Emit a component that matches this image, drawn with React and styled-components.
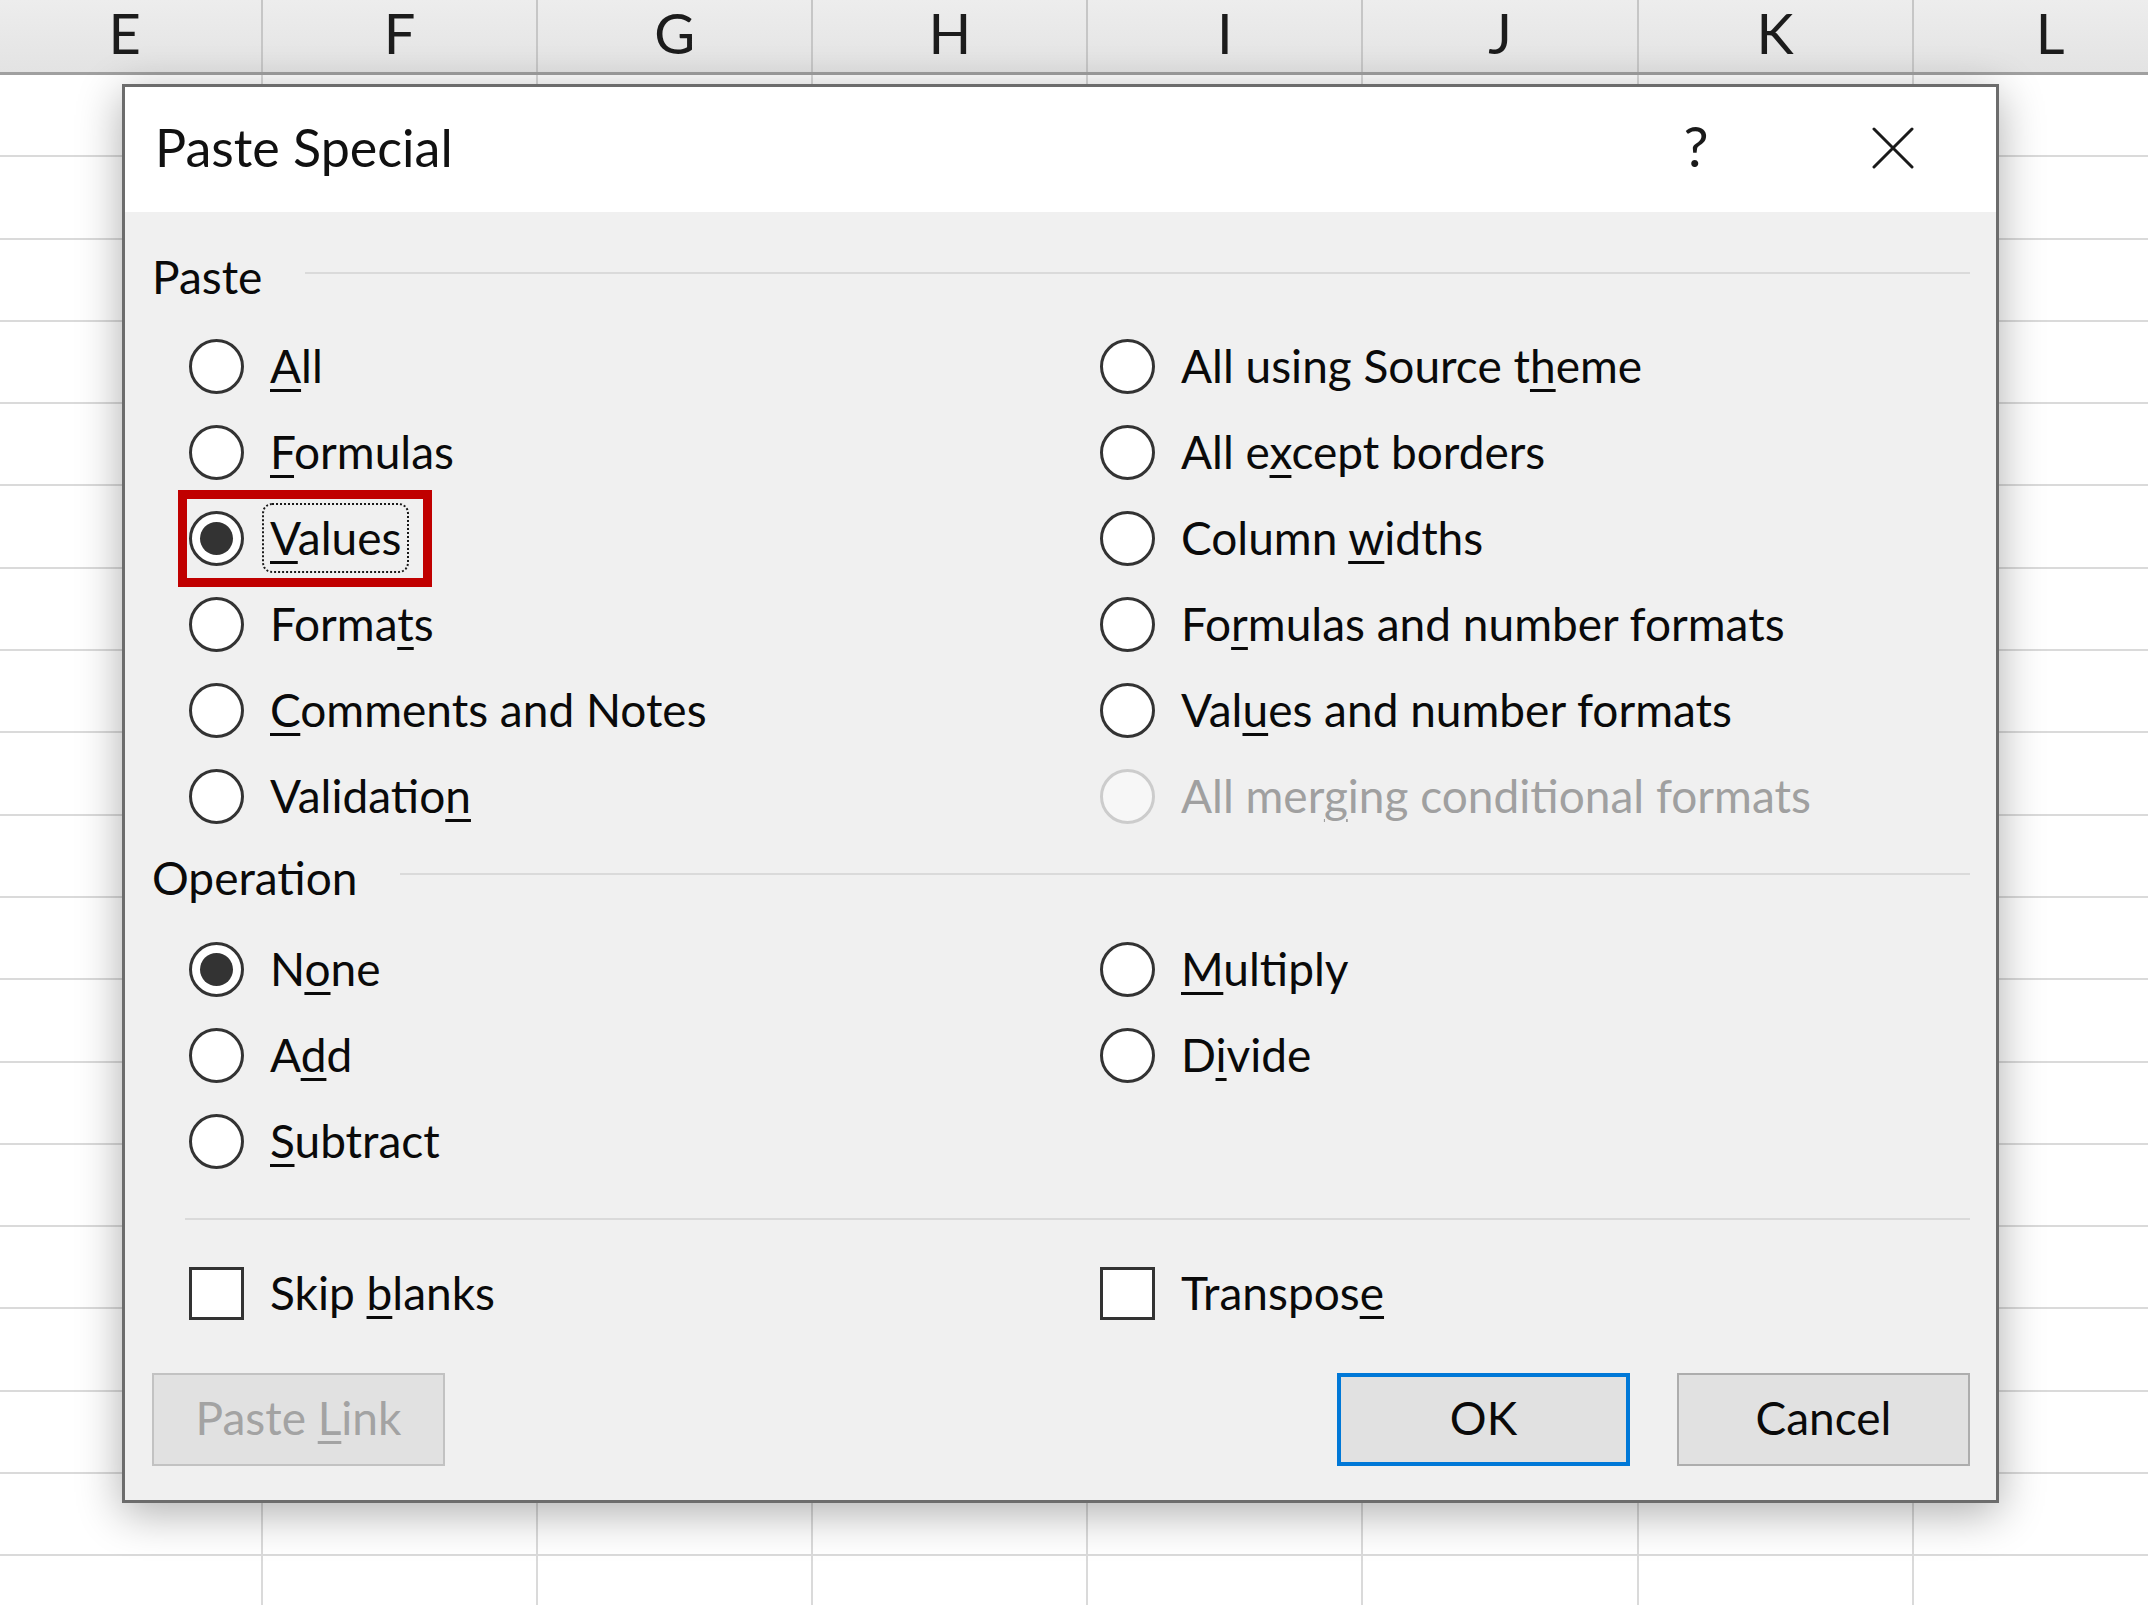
import React from 'react';
import styled, { createGlobalStyle } from 'styled-components';

const FONT = `"Lato", "Noto Sans", "Liberation Sans", sans-serif`;

const Global = createGlobalStyle`
  html, body { margin: 0; padding: 0; }
  body {
    width: 2148px;
    height: 1605px;
    overflow: hidden;
    background: #ffffff;
    font-family: ${FONT};
  }
`;

const Page = styled.div`
  position: relative;
  width: 2148px;
  height: 1605px;
  overflow: hidden;
  background: #ffffff;
`;

/* ---------- spreadsheet behind ---------- */
const Sheet = styled.div`
  display: flex;
  flex-direction: column;
  margin-left: -12px;
`;

const HeaderRow = styled.div`
  display: flex;
  height: 75px;
  box-sizing: border-box;
  background: linear-gradient(#ededed, #e3e3e3);
  border-bottom: 3px solid #a0a0a0;
`;

const ColHead = styled.div`
  flex: 0 0 275.1px;
  box-sizing: border-box;
  border-right: 2px solid #c6c6c6;
  display: flex;
  align-items: center;
  justify-content: center;
  font-size: 56px;
  color: #1c1c1c;
  padding-bottom: 8px;
`;

const GridRow = styled.div`
  display: flex;
  height: 82.3px;
`;

const Cell = styled.div`
  flex: 0 0 275.1px;
  box-sizing: border-box;
  border-right: 2px solid #dadada;
  border-bottom: 2px solid #dadada;
`;

/* ---------- dialog ---------- */
const Dialog = styled.div`
  position: absolute;
  left: 122px;
  top: 84px;
  width: 1877px;
  height: 1419px;
  box-sizing: border-box;
  border: 3px solid #6c6c6c;
  box-shadow: 0 10px 42px rgba(0, 0, 0, 0.32);
  display: flex;
  flex-direction: column;
  font-family: ${FONT};
  color: #000;
`;

const TitleBar = styled.div`
  height: 125px;
  flex: 0 0 125px;
  background: #ffffff;
  display: flex;
  align-items: center;
  padding: 0 43px 0 30px;
`;

const Title = styled.div`
  font-size: 52px;
  color: #111;
  flex: 1;
  padding-bottom: 6px;
`;

const HelpBtn = styled.div`
  width: 100px;
  margin-right: 87px;
  text-align: center;
  font-size: 56px;
  font-weight: 400;
  color: #1a1a1a;
  padding-bottom: 8px;
`;

const CloseBtn = styled.div`
  width: 120px;
  display: flex;
  justify-content: center;
  align-items: center;
  padding-bottom: 4px;
`;

const Body = styled.div`
  flex: 1;
  background: #f0f0f0;
  padding: 40px 26px 34px 27px;
  display: flex;
  flex-direction: column;
`;

const GroupHeader = styled.div`
  display: flex;
  align-items: center;
  height: 50px;
  margin-top: ${(p) => p.$mt || 0}px;
`;

const GroupLabel = styled.span`
  font-size: 46px;
  line-height: 50px;
  color: #0a0a0a;
`;

const GroupLine = styled.div`
  flex: 1;
  height: 2px;
  background: #dadada;
  margin-left: 43px;
  margin-bottom: 8px;
`;

const OptionGrid = styled.div`
  display: grid;
  grid-template-columns: 911px 1fr;
  grid-auto-rows: 86px;
  padding-left: 37px;
  margin-top: ${(p) => p.$mt || 0}px;
`;

const Option = styled.div`
  display: flex;
  align-items: center;
  position: relative;

  ${(p) =>
    p.$highlight &&
    `
    &::before {
      content: '';
      position: absolute;
      left: -11px;
      top: -5px;
      width: 254px;
      height: 97px;
      box-sizing: border-box;
      border: 9px solid #c00000;
      pointer-events: none;
    }
  `}
`;

const Radio = styled.span`
  flex: 0 0 55px;
  width: 55px;
  height: 55px;
  box-sizing: border-box;
  border-radius: 50%;
  border: 3.5px solid ${(p) => (p.$disabled ? '#cccccc' : '#333333')};
  background: ${(p) => (p.$disabled ? '#f7f7f7' : '#ffffff')};
  display: flex;
  align-items: center;
  justify-content: center;

  &::after {
    content: '';
    display: ${(p) => (p.$checked ? 'block' : 'none')};
    width: 33px;
    height: 33px;
    border-radius: 50%;
    background: #333333;
  }
`;

const CheckBox = styled.span`
  flex: 0 0 55px;
  width: 55px;
  height: 53px;
  box-sizing: border-box;
  border: 3.5px solid #333333;
  background: #ffffff;
`;

const Label = styled.span`
  margin-left: 26px;
  font-size: 46px;
  line-height: 54px;
  white-space: nowrap;
  color: ${(p) => (p.$disabled ? '#a0a0a0' : '#0a0a0a')};
  ${(p) =>
    p.$focused &&
    `
    outline: 2.5px dotted #1a1a1a;
    outline-offset: 6px;
    border-radius: 2px;
  `}
`;

const U = styled.span`
  text-decoration: underline;
  text-decoration-thickness: 3px;
  text-underline-offset: 6px;
`;

const Separator = styled.div`
  height: 2px;
  background: #dadada;
  margin: 34px 0 0 33px;
`;

const ButtonRow = styled.div`
  display: flex;
  align-items: center;
  margin-top: 37px;
  gap: 47px;
`;

const Spacer = styled.div`
  flex: 1;
`;

const Button = styled.button`
  width: 293px;
  height: 93px;
  box-sizing: border-box;
  font-family: ${FONT};
  font-size: 46px;
  background: #e1e1e1;
  color: ${(p) => (p.$disabled ? '#a3a3a3' : '#0a0a0a')};
  border: ${(p) =>
    p.$primary ? '4px solid #0078d7' : p.$disabled ? '2px solid #c2c2c2' : '2px solid #adadad'};
  padding: 0 0 4px;
  margin: 0;
  cursor: default;
`;

/* ---------- data ---------- */
const L = (before, key, after) => (
  <>
    {before}
    <U>{key}</U>
    {after}
  </>
);

const pasteLeft = [
  { label: L('', 'A', 'll') },
  { label: L('', 'F', 'ormulas') },
  { label: L('', 'V', 'alues'), checked: true, focused: true, highlight: true },
  { label: L('Forma', 't', 's') },
  { label: L('', 'C', 'omments and Notes') },
  { label: L('Validatio', 'n', '') },
];

const pasteRight = [
  { label: L('All using Source t', 'h', 'eme') },
  { label: L('All e', 'x', 'cept borders') },
  { label: L('Column ', 'w', 'idths') },
  { label: L('Fo', 'r', 'mulas and number formats') },
  { label: L('Val', 'u', 'es and number formats') },
  { label: L('All mer', 'g', 'ing conditional formats'), disabled: true },
];

const opLeft = [
  { label: L('N', 'o', 'ne'), checked: true },
  { label: L('A', 'd', 'd') },
  { label: L('', 'S', 'ubtract') },
];

const opRight = [
  { label: L('', 'M', 'ultiply') },
  { label: L('D', 'i', 'vide') },
  null,
];

const interleave = (a, b) => {
  const out = [];
  for (let i = 0; i < a.length; i++) {
    out.push(a[i]);
    out.push(b[i]);
  }
  return out;
};

const RadioOption = ({ item }) => {
  if (!item) return <div />;
  return (
    <Option $highlight={item.highlight}>
      <Radio $checked={item.checked} $disabled={item.disabled} />
      <Label $disabled={item.disabled} $focused={item.focused}>
        {item.label}
      </Label>
    </Option>
  );
};

const CloseIcon = () => (
  <svg width="42" height="42" viewBox="0 0 42 42">
    <path d="M2 2 L40 40 M40 2 L2 40" stroke="#1a1a1a" strokeWidth="3" strokeLinecap="round" fill="none" />
  </svg>
);

const columns = ['E', 'F', 'G', 'H', 'I', 'J', 'K', 'L'];
const rows = Array.from({ length: 19 }, (_, i) => i);

export default function App() {
  return (
    <Page>
      <Global />
      <Sheet>
        <HeaderRow>
          {columns.map((c) => (
            <ColHead key={c}>{c}</ColHead>
          ))}
        </HeaderRow>
        {rows.map((r) => (
          <GridRow key={r}>
            {columns.map((c) => (
              <Cell key={c} />
            ))}
          </GridRow>
        ))}
      </Sheet>

      <Dialog>
        <TitleBar>
          <Title>Paste Special</Title>
          <HelpBtn>?</HelpBtn>
          <CloseBtn>
            <CloseIcon />
          </CloseBtn>
        </TitleBar>
        <Body>
          <GroupHeader>
            <GroupLabel>Paste</GroupLabel>
            <GroupLine />
          </GroupHeader>
          <OptionGrid $mt={21}>
            {interleave(pasteLeft, pasteRight).map((item, i) => (
              <RadioOption key={i} item={item} />
            ))}
          </OptionGrid>

          <GroupHeader $mt={14}>
            <GroupLabel>Operation</GroupLabel>
            <GroupLine />
          </GroupHeader>
          <OptionGrid $mt={23}>
            {interleave(opLeft, opRight).map((item, i) => (
              <RadioOption key={i} item={item} />
            ))}
          </OptionGrid>

          <Separator />

          <OptionGrid $mt={30}>
            <Option>
              <CheckBox />
              <Label>{L('Skip ', 'b', 'lanks')}</Label>
            </Option>
            <Option>
              <CheckBox />
              <Label>{L('Transpos', 'e', '')}</Label>
            </Option>
          </OptionGrid>

          <ButtonRow>
            <Button $disabled>{L('Paste ', 'L', 'ink')}</Button>
            <Spacer />
            <Button $primary>OK</Button>
            <Button>Cancel</Button>
          </ButtonRow>
        </Body>
      </Dialog>
    </Page>
  );
}
